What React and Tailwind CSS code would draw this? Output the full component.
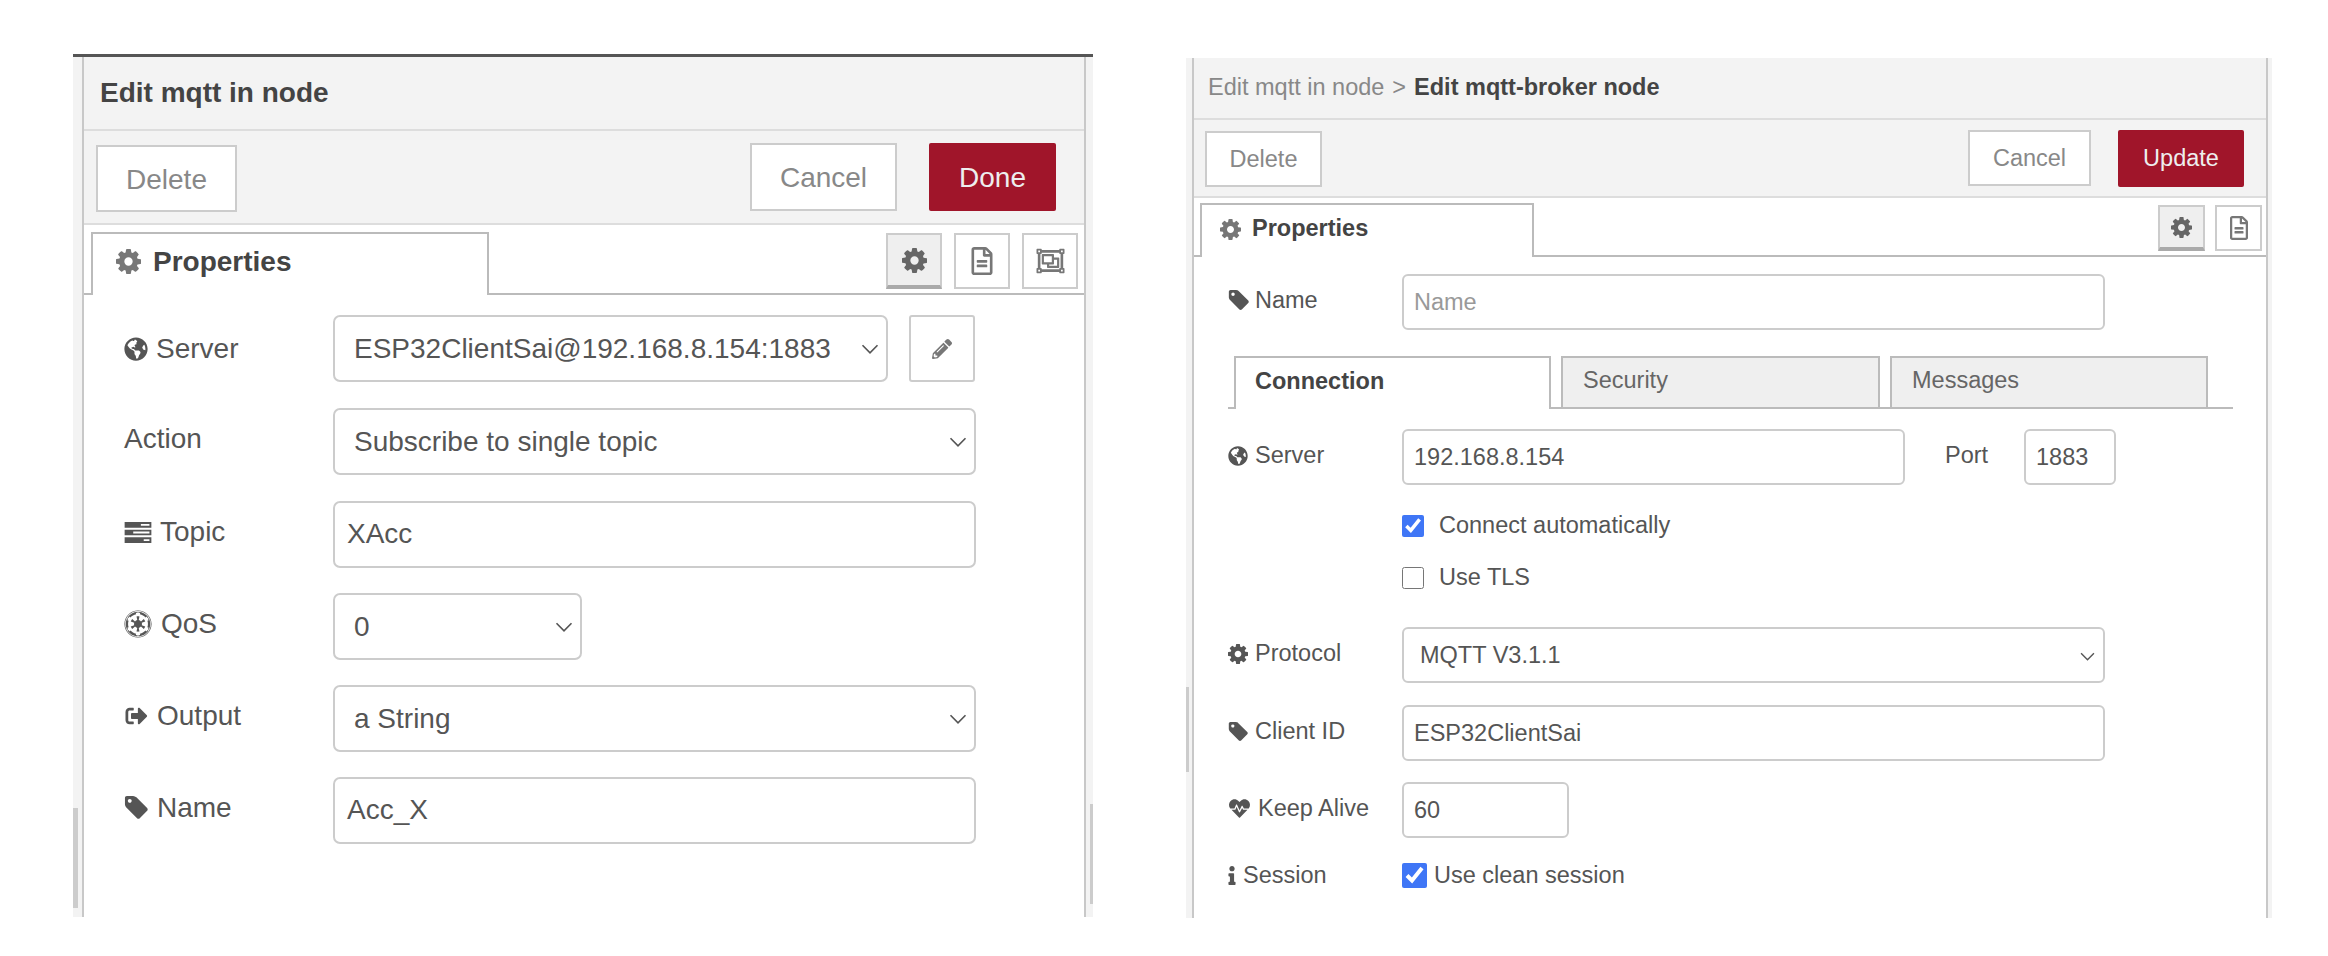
import { FaGlobeAmericas, FaEmpire, FaSignOutAlt, FaPencilAlt, FaRegFileAlt, FaRegObjectGroup, FaHeartbeat, FaInfo } from 'react-icons/fa'

function Cog({ className }) {
  return (
    <svg viewBox="128 128 1536 1536" className={className} fill="currentColor">
      <path d="M1152 896q0-106-75-181t-181-75-181 75-75 181 75 181 181 75 181-75 75-181zm512-109v222q0 12-8 23t-20 13l-185 28q-19 54-39 91 35 50 107 138 10 12 10 25t-9 23q-27 37-99 108t-94 71q-12 0-26-9l-138-108q-44 23-91 38-16 136-29 186-7 28-36 28h-222q-14 0-24.500-8.500t-11.500-21.500l-28-184q-49-16-90-37l-141 107q-10 9-25 9-14 0-25-11-126-114-165-168-7-10-7-23 0-12 8-23 15-21 51-66.500t54-70.500q-27-50-41-99l-183-27q-13-2-21-12.500t-8-23.500v-222q0-12 8-23t19-13l186-28q14-46 39-92-40-57-107-138-10-12-10-24 0-10 9-23 26-36 98.500-107.500t94.500-71.500q13 0 26 10l138 107q44-23 91-38 16-136 29-186 7-28 36-28h222q14 0 24.500 8.500t11.500 21.500l28 184q49 16 90 37l142-107q9-9 24-9 13 0 25 10 129 119 165 170 7 8 7 22 0 12-8 23-15 21-51 66.500t-54 70.500q26 50 41 98l183 28q13 2 21 12.500t8 23.500z" />
    </svg>
  )
}

function Tag({ className }) {
  return (
    <svg viewBox="64 128 1600 1600" className={className} fill="currentColor">
      <path d="M576 448q0-53-37.500-90.500t-90.500-37.500-90.500 37.500-37.500 90.500 37.500 90.500 90.500 37.500 90.500-37.500 37.500-90.500zm1067 576q0 53-37 90l-491 492q-39 37-91 37-53 0-90-37l-715-716q-38-37-64.500-101t-26.500-117v-416q0-52 38-90t90-38h416q53 0 117 26.500t102 64.500l715 714q37 39 37 91z" />
    </svg>
  )
}

function Tasks({ className }) {
  return (
    <svg viewBox="0 0 28 22" className={className} fill="currentColor" fillRule="evenodd">
      <path d="M0 0h28v6H0zM17 2v2h9V2z" />
      <path d="M0 8h28v6H0zM9 10v2h17v-2z" />
      <path d="M0 16h28v6H0zM20 18v2h6v-2z" />
    </svg>
  )
}

function Chevron({ className }) {
  return (
    <svg viewBox="0 0 14 8" className={className} fill="none" stroke="#555" strokeWidth="1.3">
      <path d="M1 1l6 6 6-6" />
    </svg>
  )
}

function BigField({ width = 'w-[643px]', textPad = 'pl-[12px] pb-[2px]', chevron, children }) {
  return (
    <div className={`${width} ${textPad} h-full flex items-center justify-between pr-[7px] bg-white border-2 border-[#ccc] rounded-[7px] text-[28px] text-[#555]`}>
      <span>{children}</span>
      {chevron && <Chevron className="w-[18px] h-[10px]" />}
    </div>
  )
}

function BigRow({ icon, label, gap = 'gap-[9px]', labelShift = 'mb-[5px]', className, children }) {
  return (
    <div className={`flex items-center h-[67px] pl-[40px] ${className}`}>
      <div className={`w-[209px] flex items-center ${gap} ${labelShift} text-[28px] text-[#555]`}>
        {icon}
        <span>{label}</span>
      </div>
      {children}
    </div>
  )
}

function MqttInPanel() {
  return (
    <section className="w-[1020px] h-[863px] mt-[54px] flex flex-col border-t-[3px] border-[#555] bg-[#f3f3f3]">
      <div className="flex h-full">
        <div className="w-[9px] flex flex-col justify-end pb-[9px]">
          <div className="w-[5px] h-[100px] bg-[#ccc]" />
        </div>
        <div className="w-[1004px] flex flex-col border-x-2 border-[#c8c8c8] bg-white">
          <div className="h-[74px] pl-[16px] flex items-center bg-[#f3f3f3] border-b-2 border-[#ddd] text-[28px] font-bold text-[#444]">
            Edit mqtt in node
          </div>
          <div className="h-[94px] pl-[12px] pr-[28px] flex items-start justify-between bg-[#f3f3f3] border-b-2 border-[#ddd]">
            <div className="mt-[14px] w-[141px] h-[67px] pt-[2px] flex items-center justify-center bg-white border-2 border-[#ccc] text-[28px] text-[#888]">
              Delete
            </div>
            <div className="mt-[12px] flex gap-[32px]">
              <div className="w-[147px] h-[68px] pt-[2px] flex items-center justify-center bg-white border-2 border-[#ccc] text-[28px] text-[#888]">
                Cancel
              </div>
              <div className="w-[127px] h-[68px] pt-[2px] flex items-center justify-center bg-[#a0152a] rounded-[2px] text-[28px] text-[#eee]">
                Done
              </div>
            </div>
          </div>
          <div className="h-[70px] pl-[7px] pr-[6px] flex items-start justify-between border-b-2 border-[#bbb]">
            <div className="mt-[7px] w-[398px] h-[63px] pl-[23px] pb-[6px] flex items-center gap-[12px] bg-white border-x-2 border-t-2 border-[#bbb] text-[28px] font-bold text-[#444]">
              <Cog className="w-[25px] h-[25px] text-[#777]" />
              Properties
            </div>
            <div className="mt-[8px] flex gap-[12px]">
              <div className="w-[56px] h-[56px] flex items-center justify-center bg-[#efefef] border-2 border-[#ccc] border-b-[4px] border-b-[#aaa]">
                <Cog className="w-[25px] h-[25px] text-[#666]" />
              </div>
              <div className="w-[56px] h-[56px] flex items-center justify-center border-2 border-[#ccc]">
                <FaRegFileAlt className="w-[24px] h-[28px] text-[#777]" />
              </div>
              <div className="w-[56px] h-[56px] flex items-center justify-center border-2 border-[#ccc]">
                <FaRegObjectGroup className="w-[33px] h-[28px] text-[#777]" />
              </div>
            </div>
          </div>
          <BigRow className="mt-[20px]" label="Server" gap="gap-[8px]" labelShift="mb-0" icon={<FaGlobeAmericas className="w-[24px] h-[24px]" />}>
            <BigField width="w-[555px]" textPad="pl-[19px]" chevron>ESP32ClientSai@192.168.8.154:1883</BigField>
            <div className="ml-[21px] w-[66px] h-full flex items-center justify-center border-2 border-[#ccc] rounded-[3px]">
              <FaPencilAlt className="w-[20px] h-[20px] text-[#777]" />
            </div>
          </BigRow>
          <BigRow className="mt-[26px]" label="Action">
            <BigField textPad="pl-[19px]" chevron>Subscribe to single topic</BigField>
          </BigRow>
          <BigRow className="mt-[26px]" label="Topic" gap="gap-[8px]" icon={<Tasks className="w-[28px] h-[21px]" />}>
            <BigField>XAcc</BigField>
          </BigRow>
          <BigRow className="mt-[25px]" label="QoS" icon={<FaEmpire className="w-[28px] h-[28px]" />}>
            <BigField width="w-[249px]" textPad="pl-[19px]" chevron>0</BigField>
          </BigRow>
          <BigRow className="mt-[25px]" label="Output" gap="gap-[8px]" icon={<FaSignOutAlt className="w-[25px] h-[22px]" />}>
            <BigField textPad="pl-[19px]" chevron>a String</BigField>
          </BigRow>
          <BigRow className="mt-[25px]" label="Name" icon={<Tag className="w-[24px] h-[24px]" />}>
            <BigField>Acc_X</BigField>
          </BigRow>
        </div>
        <div className="w-[7px] flex flex-col items-end justify-end pb-[13px]">
          <div className="w-[3px] h-[100px] bg-[#ccc]" />
        </div>
      </div>
    </section>
  )
}

function Field({ width = 'w-[703px]', textPad = 'pl-[10px]', chevron, muted, children }) {
  return (
    <div className={`${width} ${textPad} h-full pt-[2px] flex items-center justify-between pr-[8px] bg-white border-2 border-[#ccc] rounded-[6px] text-[23.5px] ${muted ? 'text-[#999]' : 'text-[#555]'}`}>
      <span>{children}</span>
      {chevron && <Chevron className="w-[15px] h-[9px]" />}
    </div>
  )
}

function Row({ icon, label, gap = 'gap-[7px]', className, children }) {
  return (
    <div className={`flex items-center h-[56px] pl-[34px] ${className}`}>
      <div className={`w-[174px] flex items-center ${gap} text-[23.5px] text-[#555] mb-[3px]`}>
        {icon}
        <span>{label}</span>
      </div>
      {children}
    </div>
  )
}

function BrokerPanel() {
  return (
    <section className="w-[1086px] h-[860px] mt-[58px] flex bg-[#f3f3f3]">
      <div className="w-[6px] flex flex-col justify-end pb-[146px]">
        <div className="w-[3px] h-[85px] bg-[#ccc]" />
      </div>
      <div className="w-[1076px] flex flex-col border-x-2 border-[#c8c8c8] bg-white">
        <div className="h-[62px] pl-[14px] pb-[1px] flex items-center gap-[8px] bg-[#f3f3f3] border-b-2 border-[#ddd] text-[23.5px] text-[#888]">
          <span>Edit mqtt in node</span>
          <span>&gt;</span>
          <span className="font-bold text-[#444]">Edit mqtt-broker node</span>
        </div>
        <div className="h-[78px] pl-[11px] pr-[22px] flex items-start justify-between bg-[#f3f3f3] border-b-2 border-[#ddd]">
          <div className="mt-[11px] w-[117px] h-[56px] pt-[2px] flex items-center justify-center bg-white border-2 border-[#ccc] text-[23.5px] text-[#888]">
            Delete
          </div>
          <div className="mt-[10px] flex gap-[27px]">
            <div className="w-[123px] h-[56px] pt-[2px] flex items-center justify-center bg-white border-2 border-[#ccc] text-[23.5px] text-[#888]">
              Cancel
            </div>
            <div className="w-[126px] h-[57px] flex items-center justify-center bg-[#a0152a] rounded-[2px] text-[23.5px] text-[#eee]">
              Update
            </div>
          </div>
        </div>
        <div className="h-[59px] pl-[6px] pr-[4px] flex items-start justify-between border-b-2 border-[#bbb]">
          <div className="mt-[5px] w-[334px] h-[54px] pl-[18px] pb-[4px] flex items-center gap-[11px] bg-white border-x-2 border-t-2 border-[#bbb] text-[23.5px] font-bold text-[#444]">
            <Cog className="w-[21px] h-[21px] text-[#777]" />
            Properties
          </div>
          <div className="mt-[7px] flex gap-[10px]">
            <div className="w-[47px] h-[46px] flex items-center justify-center bg-[#efefef] border-2 border-[#ccc] border-b-[4px] border-b-[#aaa]">
              <Cog className="w-[21px] h-[21px] text-[#666]" />
            </div>
            <div className="w-[47px] h-[46px] flex items-center justify-center border-2 border-[#ccc]">
              <FaRegFileAlt className="w-[20px] h-[24px] text-[#777]" />
            </div>
          </div>
        </div>
        <Row className="mt-[17px]" label="Name" gap="gap-[6px]" icon={<Tag className="w-[21px] h-[21px]" />}>
          <Field muted>Name</Field>
        </Row>
        <div className="mt-[26px] ml-[34px] w-[1005px] h-[53px] pl-[6px] flex items-end gap-[10px] border-b-2 border-[#bbb] text-[23.5px]">
          <div className="w-[317px] h-[53px] -mb-[2px] pl-[19px] pb-[4px] flex items-center bg-white border-x-2 border-t-2 border-[#bbb] font-bold text-[#444]">
            Connection
          </div>
          <div className="w-[319px] h-[51px] pl-[20px] pb-[3px] flex items-center bg-[#efefef] border-x-2 border-t-2 border-[#bbb] text-[#666]">
            Security
          </div>
          <div className="w-[318px] h-[51px] pl-[20px] pb-[3px] flex items-center bg-[#efefef] border-x-2 border-t-2 border-[#bbb] text-[#666]">
            Messages
          </div>
        </div>
        <Row className="mt-[20px]" label="Server" icon={<FaGlobeAmericas className="w-[20px] h-[20px]" />}>
          <Field width="w-[503px]">192.168.8.154</Field>
          <span className="ml-[40px] mb-[3px] w-[79px] text-[23.5px] text-[#555]">Port</span>
          <Field width="w-[92px]">1883</Field>
        </Row>
        <label className="mt-[29px] ml-[208px] h-[24px] flex items-center gap-[15px] text-[23.5px] text-[#555]">
          <input type="checkbox" defaultChecked className="w-[22px] h-[22px] m-0 accent-[#3f76f6]" />
          Connect automatically
        </label>
        <label className="mt-[28px] ml-[208px] h-[24px] flex items-center gap-[15px] text-[23.5px] text-[#555]">
          <input type="checkbox" className="w-[22px] h-[22px] m-0" />
          Use TLS
        </label>
        <Row className="mt-[37px]" label="Protocol" icon={<Cog className="w-[20px] h-[20px]" />}>
          <Field textPad="pl-[16px]" chevron>MQTT V3.1.1</Field>
        </Row>
        <Row className="mt-[22px]" label="Client ID" icon={<Tag className="w-[20px] h-[20px]" />}>
          <Field>ESP32ClientSai</Field>
        </Row>
        <Row className="mt-[21px]" label="Keep Alive" icon={<FaHeartbeat className="w-[23px] h-[21px]" />}>
          <Field width="w-[167px]">60</Field>
        </Row>
        <div className="mt-[25px] h-[25px] pl-[34px] flex items-center text-[23.5px] text-[#555]">
          <div className="w-[174px] flex items-center gap-[7px]">
            <FaInfo className="w-[8px] h-[19px]" />
            <span>Session</span>
          </div>
          <input type="checkbox" defaultChecked className="w-[25px] h-[25px] m-0 accent-[#3f76f6]" />
          <span className="ml-[7px]">Use clean session</span>
        </div>
      </div>
      <div className="w-[4px]" />
    </section>
  )
}

export default function App() {
  return (
    <div className="w-[2328px] h-[956px] overflow-hidden flex items-start gap-[93px] pl-[73px] bg-white font-['Liberation_Sans',Arial,sans-serif]">
      <MqttInPanel />
      <BrokerPanel />
    </div>
  )
}
